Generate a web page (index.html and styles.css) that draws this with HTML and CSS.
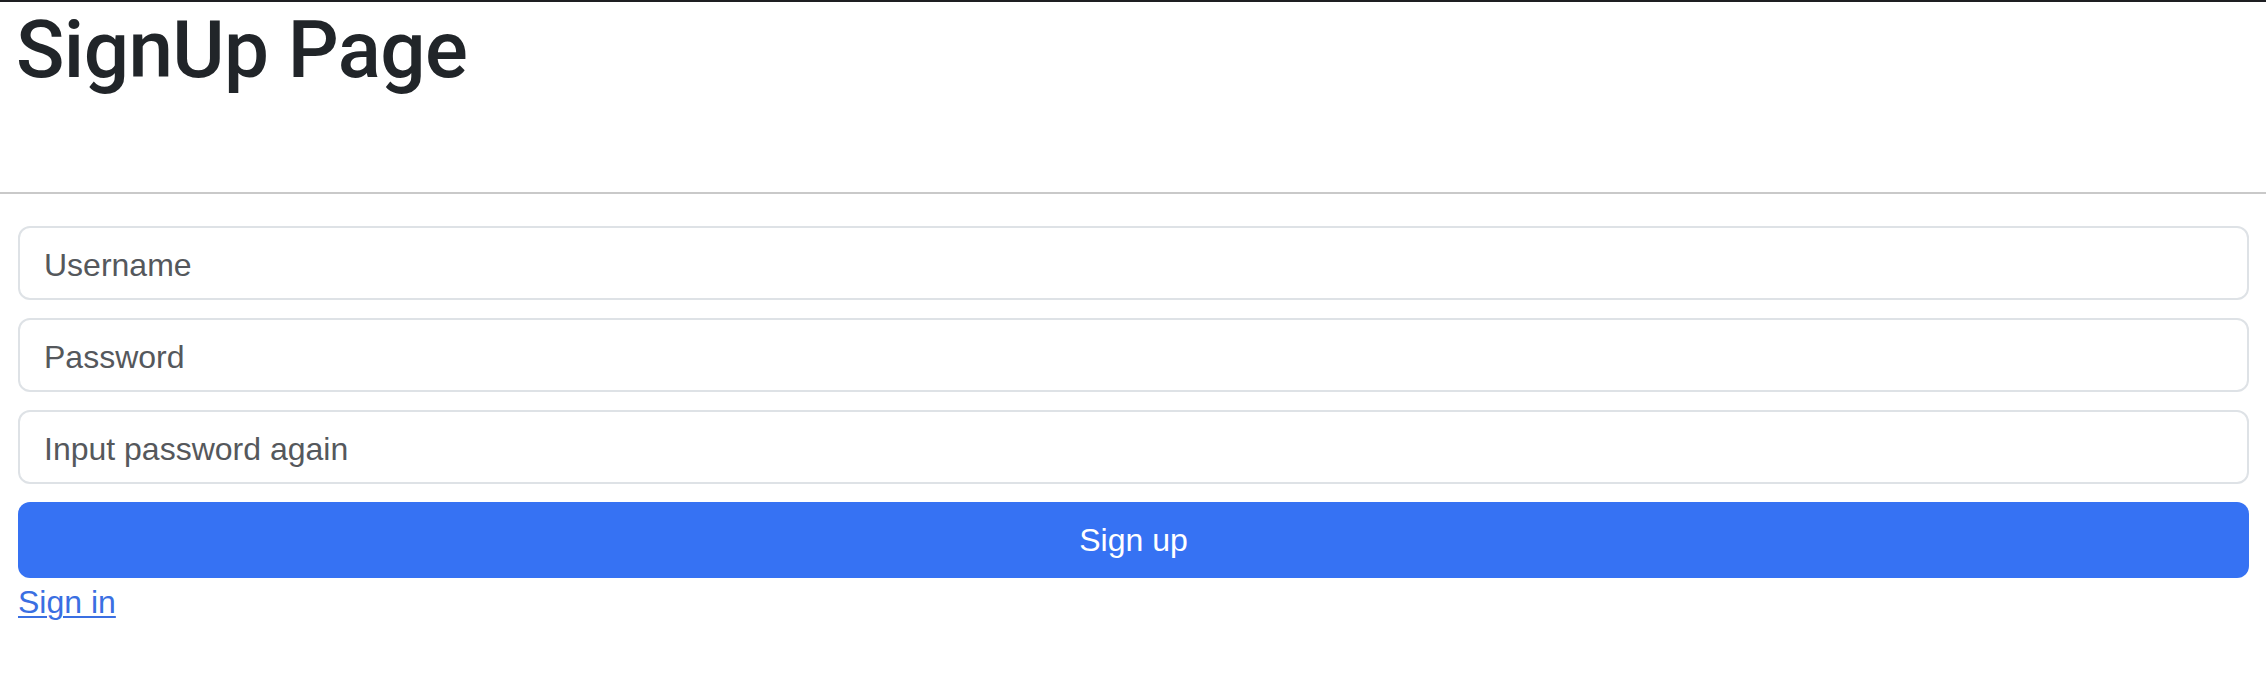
FILE: index.html
```html
<!DOCTYPE html>
<html lang="en">
<head>
<meta charset="utf-8">
<title>SignUp Page</title>
<link rel="stylesheet" href="styles.css">
</head>
<body>
<header class="page-header">
  <h1 class="title">SignUp Page</h1>
</header>
<main class="form-wrap">
  <form class="signup-form">
    <input class="field" type="text" placeholder="Username">
    <input class="field" type="password" placeholder="Password">
    <input class="field" type="password" placeholder="Input password again">
    <button class="btn-primary" type="button">Sign up</button>
  </form>
  <a class="signin-link" href="#">Sign in</a>
</main>
</body>
</html>
```

FILE: styles.css
```css
* { box-sizing: border-box; }

html, body {
  margin: 0;
  padding: 0;
  background: #ffffff;
}

body {
  border-top: 2px solid #1e1f22;
  font-family: "Liberation Sans", Arial, Helvetica, sans-serif;
  color: #212529;
  width: 2266px;
  min-height: 690px;
}

.page-header {
  height: 192px;
  border-bottom: 2px solid #c9c9c9;
  padding: 0 16px;
}

.title {
  margin: 0;
  font-family: Roboto, "Liberation Sans", Arial, sans-serif;
  font-size: 80px;
  line-height: 96px;
  font-weight: 500;
  letter-spacing: -0.6px;
  color: #212529;
}

.form-wrap {
  padding: 32px 17px 0 18px;
}

.signup-form {
  display: flex;
  flex-direction: column;
  gap: 18px;
}

.field {
  display: block;
  width: 100%;
  height: 74px;
  margin: 0;
  padding: 4px 24px 0 24px;
  border: 2px solid #dee2e6;
  border-radius: 12px;
  background: #ffffff;
  font-family: "Liberation Sans", Arial, Helvetica, sans-serif;
  font-size: 32px;
  color: #212529;
  outline: none;
}

.field::placeholder {
  color: #55585c;
  opacity: 1;
}

.btn-primary {
  display: block;
  width: 100%;
  height: 76px;
  margin: 0;
  padding: 0;
  border: none;
  border-radius: 12px;
  background: #3672f3;
  color: #ffffff;
  font-family: "Liberation Sans", Arial, Helvetica, sans-serif;
  font-size: 32px;
  line-height: 48px;
  cursor: pointer;
}

.signin-link {
  display: inline-block;
  margin-top: 0;
  font-size: 32px;
  line-height: 48px;
  color: #3a6fe2;
  text-decoration: underline;
  text-decoration-thickness: 2px;
  text-underline-offset: 3px;
}
```
